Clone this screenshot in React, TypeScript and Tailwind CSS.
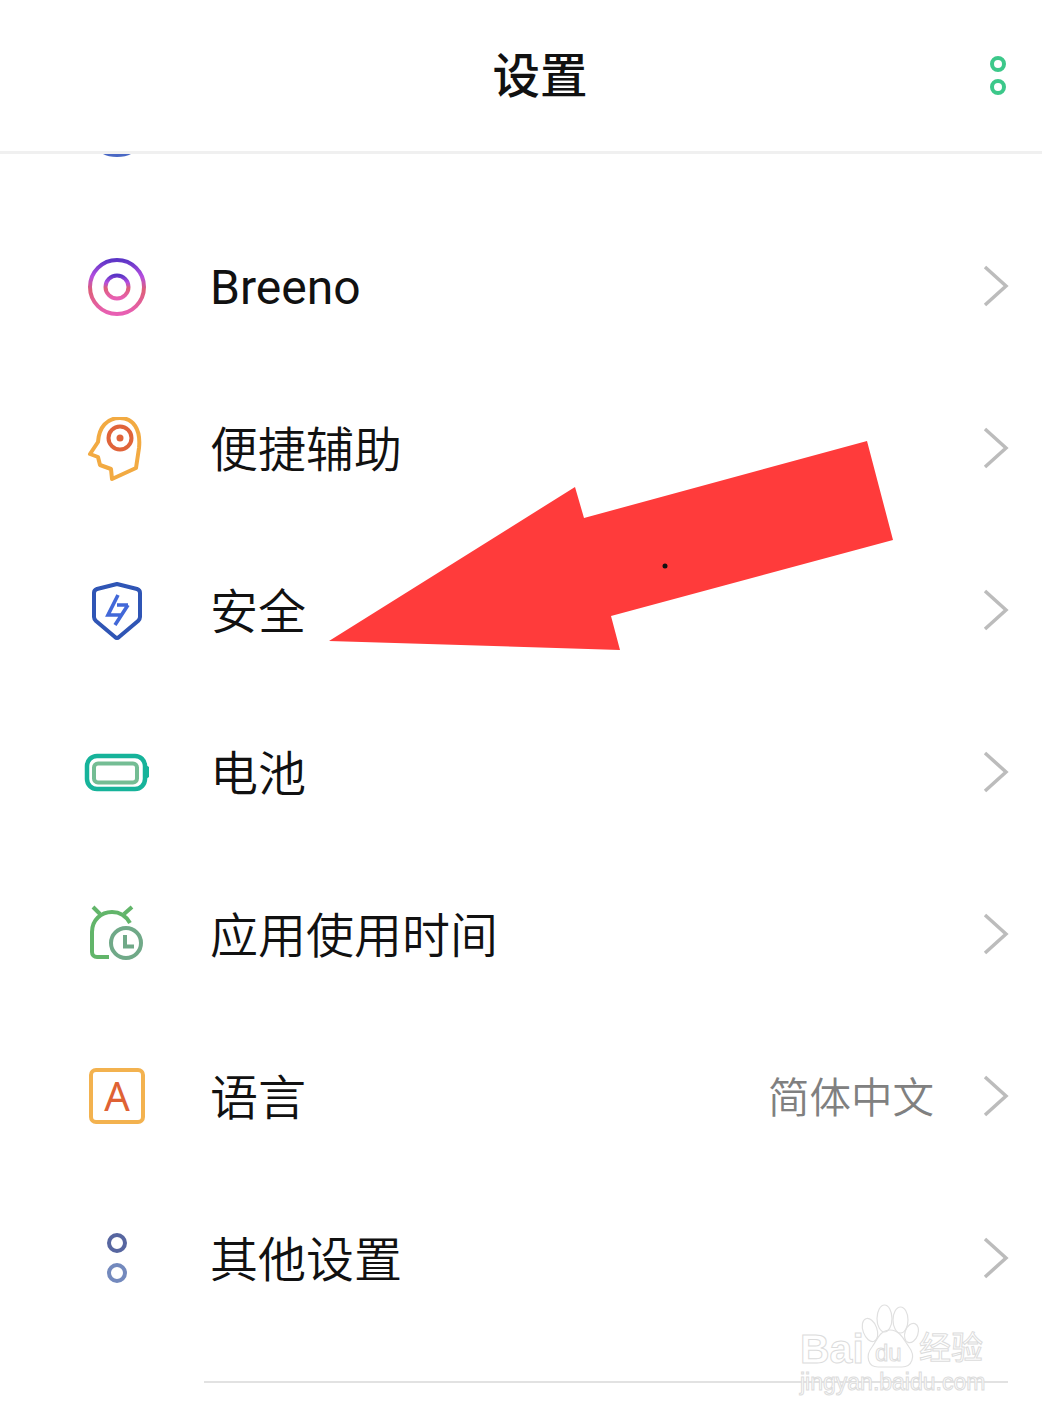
const cjk = "font-['Roboto','Noto_Sans_CJK_SC',sans-serif]";

function Chevron() {
  return (
    <svg width="26" height="42" viewBox="0 0 26 42" fill="none" className="shrink-0 -mt-[2px]">
      <path d="M2 2 L23 21 L2 40" stroke="#bcbcbc" strokeWidth="3.5" />
    </svg>
  );
}

function BreenoIcon() {
  return (
    <svg width="64" height="64" viewBox="85 254 64 64" fill="none">
      <defs>
        <linearGradient id="breeno" x1="0" y1="0" x2="0" y2="1">
          <stop offset="0" stopColor="#5b35c6" />
          <stop offset="0.3" stopColor="#b44ee0" />
          <stop offset="0.55" stopColor="#dd5f78" />
          <stop offset="1" stopColor="#e85fb4" />
        </linearGradient>
      </defs>
      <circle cx="117" cy="286" r="27" stroke="url(#breeno)" strokeWidth="4" />
      <circle cx="117" cy="286" r="11.5" stroke="url(#breeno)" strokeWidth="4" />
    </svg>
  );
}

function HeadIcon() {
  return (
    <svg width="64" height="64" viewBox="85 416 64 64" fill="none">
      <path
        d="M112 478 L136 467 L139 447 C141 428 133 417 120 417 C107 417 99 426 98 441 L90 453 L98 456 L100 464 L111 468 Z"
        stroke="#f2aa42"
        strokeWidth="4"
        strokeLinejoin="round"
      />
      <circle cx="120" cy="437" r="11.5" stroke="#e0643a" strokeWidth="4" />
      <circle cx="120" cy="437" r="3.5" fill="#e0643a" />
    </svg>
  );
}

function ShieldIcon() {
  return (
    <svg width="64" height="64" viewBox="85 578 64 64" fill="none">
      <path
        d="M117 583 L137 588 Q140 589 140 592 L140 616 Q140 618 138 620 L119 636 Q117 638 115 636 L96 620 Q94 618 94 616 L94 592 Q94 589 97 588 Z"
        stroke="#2f55b5"
        strokeWidth="4"
        strokeLinejoin="round"
      />
      <path d="M118 594 L108 614 L121 614 M128 604 L115 624 M128 604 L117 604" stroke="#4268d8" strokeWidth="3.6" />
    </svg>
  );
}

function BatteryIcon() {
  return (
    <svg width="68" height="64" viewBox="83 740 68 64" fill="none">
      <rect x="87" y="755" width="58" height="33" rx="10" stroke="#16b39a" strokeWidth="4.5" />
      <path d="M146 764 L149 766 L149 776 L146 778 Z" fill="#16b39a" />
      <rect x="94" y="762.5" width="43" height="19" rx="4" stroke="#74bd94" strokeWidth="4" />
    </svg>
  );
}

function AlarmIcon() {
  return (
    <svg width="64" height="64" viewBox="85 903 64 64" fill="none">
      <path
        d="M109 957 L97 957 C94 957 92 955 92 952 L92 932 C92 920 101 912 112 912 C120 912 126 916 130 923"
        stroke="#62b56a"
        strokeWidth="4"
      />
      <path d="M93 907 L100 914 M132 907 L124 914" stroke="#62b56a" strokeWidth="4" />
      <circle cx="126" cy="943" r="15" stroke="#70a988" strokeWidth="4" />
      <path d="M125 935 L125 946.5 L134 946.5" stroke="#70a988" strokeWidth="4" />
    </svg>
  );
}

function LanguageIcon() {
  return (
    <div className="w-[56px] h-[56px] -mt-[2px] rounded-[7px] border-[4px] border-[#f3b24f] flex items-center justify-center">
      <span className="text-[40px] leading-none text-[#df6234] font-['Noto_Sans',sans-serif]">A</span>
    </div>
  );
}

function DotsIcon() {
  return (
    <svg width="24" height="54" viewBox="0 0 24 54" fill="none" className="-mt-[2px]">
      <circle cx="12" cy="12" r="8" stroke="#5766a0" strokeWidth="4" />
      <circle cx="12" cy="42" r="8" stroke="#7389bd" strokeWidth="4" />
    </svg>
  );
}

const rows = [
  { label: "Breeno", icon: <BreenoIcon />, labelClass: "font-normal mt-[2px]" },
  { label: "便捷辅助", icon: <HeadIcon />, labelClass: "font-[350] mt-[4px]" },
  { label: "安全", icon: <ShieldIcon />, labelClass: "font-[350] mt-[4px]" },
  { label: "电池", icon: <BatteryIcon />, labelClass: "font-[350] mt-[4px]" },
  { label: "应用使用时间", icon: <AlarmIcon />, labelClass: "font-[350] mt-[4px]" },
  { label: "语言", icon: <LanguageIcon />, labelClass: "font-[350] mt-[4px]", value: "简体中文" },
  { label: "其他设置", icon: <DotsIcon />, labelClass: "font-[350] mt-[4px]" },
];

function Watermark() {
  return (
    <div className="absolute left-[798px] top-[1303px] w-[192px] h-[94px] text-white [-webkit-text-stroke:1px_#dcdcdc] font-['Liberation_Sans',sans-serif]">
      <svg width="70" height="70" viewBox="0 0 70 70" fill="none" stroke="#e0e0e0" strokeWidth="1.2" className="absolute left-[60px] top-[1px]">
        <ellipse cx="12" cy="26" rx="7" ry="12" transform="rotate(-20 12 26)" />
        <ellipse cx="26.5" cy="14.5" rx="7.5" ry="13.5" />
        <ellipse cx="42.5" cy="16" rx="7.5" ry="13" />
        <ellipse cx="53.5" cy="29" rx="6.5" ry="10" transform="rotate(20 53.5 29)" />
        <path d="M32 26 C42 26 46 36 51 43 C58 52 54 63 44 63 L20 63 C10 63 7 52 14 43 C19 36 22 26 32 26 Z" />
      </svg>
      <span className="absolute left-[2px] top-[26px] text-[41px] leading-none font-bold">Bai</span>
      <span className="absolute left-[77px] top-[38px] text-[24px] leading-none">du</span>
      <span className="absolute left-[121px] top-[26px] text-[32px] leading-none font-['Noto_Sans_CJK_SC',sans-serif]">经验</span>
      <span className="absolute left-[2px] top-[68px] text-[23px] leading-none whitespace-nowrap">jingyan.baidu.com</span>
    </div>
  );
}

export default function App() {
  return (
    <div className={`relative w-[1042px] h-[1417px] overflow-hidden bg-white text-[#111] ${cjk}`}>
      <header className="relative h-[154px] border-b-[3px] border-[#f0f0f0] flex items-center justify-center pl-[38px]">
        <h1 className="mt-[4px] text-[47.5px] font-medium leading-none">设置</h1>
        <svg width="20" height="44" viewBox="0 0 20 44" fill="none" className="absolute right-[34px] top-[54px]">
          <circle cx="10" cy="10" r="6" stroke="#3cc88a" strokeWidth="4" />
          <circle cx="10" cy="33" r="6" stroke="#3cc88a" strokeWidth="4" />
        </svg>
      </header>

      {/* previous row's icon, scrolled under the header */}
      <div className="h-[52px] pl-[100px]">
        <svg width="34" height="4" viewBox="0 0 34 4" className="block">
          <path d="M3 0 C9 4 25 4 31 0 Z" fill="#4a68c4" />
        </svg>
      </div>

      <ul>
        {rows.map((row) => (
          <li key={row.label} className="h-[162px] flex items-center pr-[33px]">
            <div className="w-[234px] flex justify-center shrink-0">{row.icon}</div>
            <span className={`-ml-[24px] text-[48px] leading-none ${row.labelClass}`}>{row.label}</span>
            {row.value && <span className="ml-auto mt-[4px] text-[41.5px] leading-none font-[350] text-[#808080]">{row.value}</span>}
            <span className={row.value ? "ml-[49px]" : "ml-auto"}>
              <Chevron />
            </span>
          </li>
        ))}
      </ul>

      <div className="mt-[41px] ml-[204px] mr-[34px] h-[2px] bg-[#e2e2e2]" />

      <svg width="1042" height="700" viewBox="0 0 1042 700" className="absolute left-0 top-0 pointer-events-none">
        <polygon points="329,641 575,487 584,518 867,441 893,540 611,616 620,650" fill="#ff3b3b" />
        <circle cx="665" cy="566" r="2.5" fill="#111" />
      </svg>

      <Watermark />
    </div>
  );
}
